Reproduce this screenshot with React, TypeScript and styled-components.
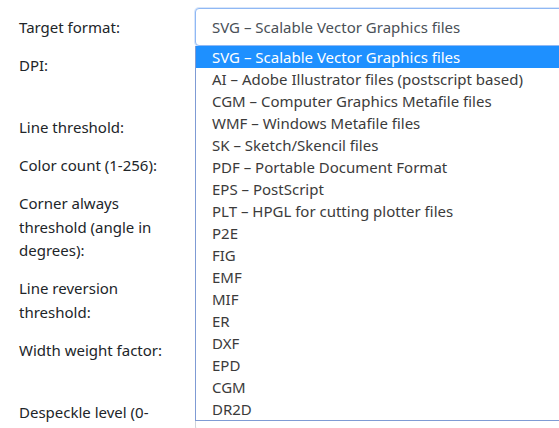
import React from "react";
import styled, { createGlobalStyle } from "styled-components";

const GlobalStyle = createGlobalStyle`
  html, body {
    margin: 0;
    padding: 0;
    background: #ffffff;
    overflow: hidden;
  }
  body {
    font-family: "Noto Sans", "Open Sans", sans-serif;
    font-size: 15px;
    color: #212529;
  }
`;

const Page = styled.div`
  width: 900px;
  padding: 8px 0 0 19px;
`;

const Form = styled.form`
  display: flex;
  flex-direction: column;
`;

const Row = styled.div`
  display: grid;
  grid-template-columns: 176px 600px;
  align-items: start;
`;

const Label = styled.label`
  display: block;
  padding: 8px 16px 6.5px 0;
  line-height: 23.5px;
  font-size: 15px;
  color: #212529;
`;

const Field = styled.div<{ $withHint?: boolean }>`
  position: relative;
  display: flex;
  flex-direction: column;
  padding-bottom: ${(p) => (p.$withHint ? "24px" : "0")};
`;

const Input = styled.div`
  box-sizing: border-box;
  height: 38px;
  border: 1px solid #ced4da;
  border-radius: 4px;
  background: #fff;
`;

const SelectBox = styled.div`
  box-sizing: border-box;
  height: 38px;
  display: flex;
  align-items: center;
  padding-left: 16px;
  border: 1px solid #8fb8f4;
  border-radius: 4px;
  background: #fff;
  box-shadow: 0 0 0 1px rgba(143, 184, 244, 0.35);
  color: #495057;
  font-size: 15px;
`;

const List = styled.ul`
  position: absolute;
  top: 38px;
  left: 0;
  width: 600px;
  margin: 0;
  padding: 0;
  list-style: none;
  box-sizing: border-box;
  border: 1px solid #7f9bd4;
  border-top: none;
  background: #fff;
  z-index: 10;
`;

const Option = styled.li<{ $active?: boolean }>`
  height: 22px;
  line-height: 22px;
  padding-left: 16px;
  font-size: 15px;
  white-space: nowrap;
  color: ${(p) => (p.$active ? "#ffffff" : "#3b3b3b")};
  background: ${(p) => (p.$active ? "#1e90ff" : "transparent")};
`;

const options = [
  "SVG – Scalable Vector Graphics files",
  "AI – Adobe Illustrator files (postscript based)",
  "CGM – Computer Graphics Metafile files",
  "WMF – Windows Metafile files",
  "SK – Sketch/Skencil files",
  "PDF – Portable Document Format",
  "EPS – PostScript",
  "PLT – HPGL for cutting plotter files",
  "P2E",
  "FIG",
  "EMF",
  "MIF",
  "ER",
  "DXF",
  "EPD",
  "CGM",
  "DR2D",
];

type RowDef = { label: string; hint?: boolean };

const rows: RowDef[] = [
  { label: "DPI:", hint: true },
  { label: "Line threshold:" },
  { label: "Color count (1-256):" },
  { label: "Corner always threshold (angle in degrees):" },
  { label: "Line reversion threshold:" },
  { label: "Width weight factor:", hint: true },
  { label: "Despeckle level (0-100):" },
];

export default function App() {
  return (
    <>
      <GlobalStyle />
      <Page>
        <Form>
          <Row>
            <Label>Target format:</Label>
            <Field>
              <SelectBox>{options[0]}</SelectBox>
              <List>
                {options.map((o, i) => (
                  <Option key={i} $active={i === 0}>
                    {o}
                  </Option>
                ))}
              </List>
            </Field>
          </Row>
          {rows.map((r) => (
            <Row key={r.label}>
              <Label>{r.label}</Label>
              <Field $withHint={r.hint}>
                <Input />
              </Field>
            </Row>
          ))}
        </Form>
      </Page>
    </>
  );
}
